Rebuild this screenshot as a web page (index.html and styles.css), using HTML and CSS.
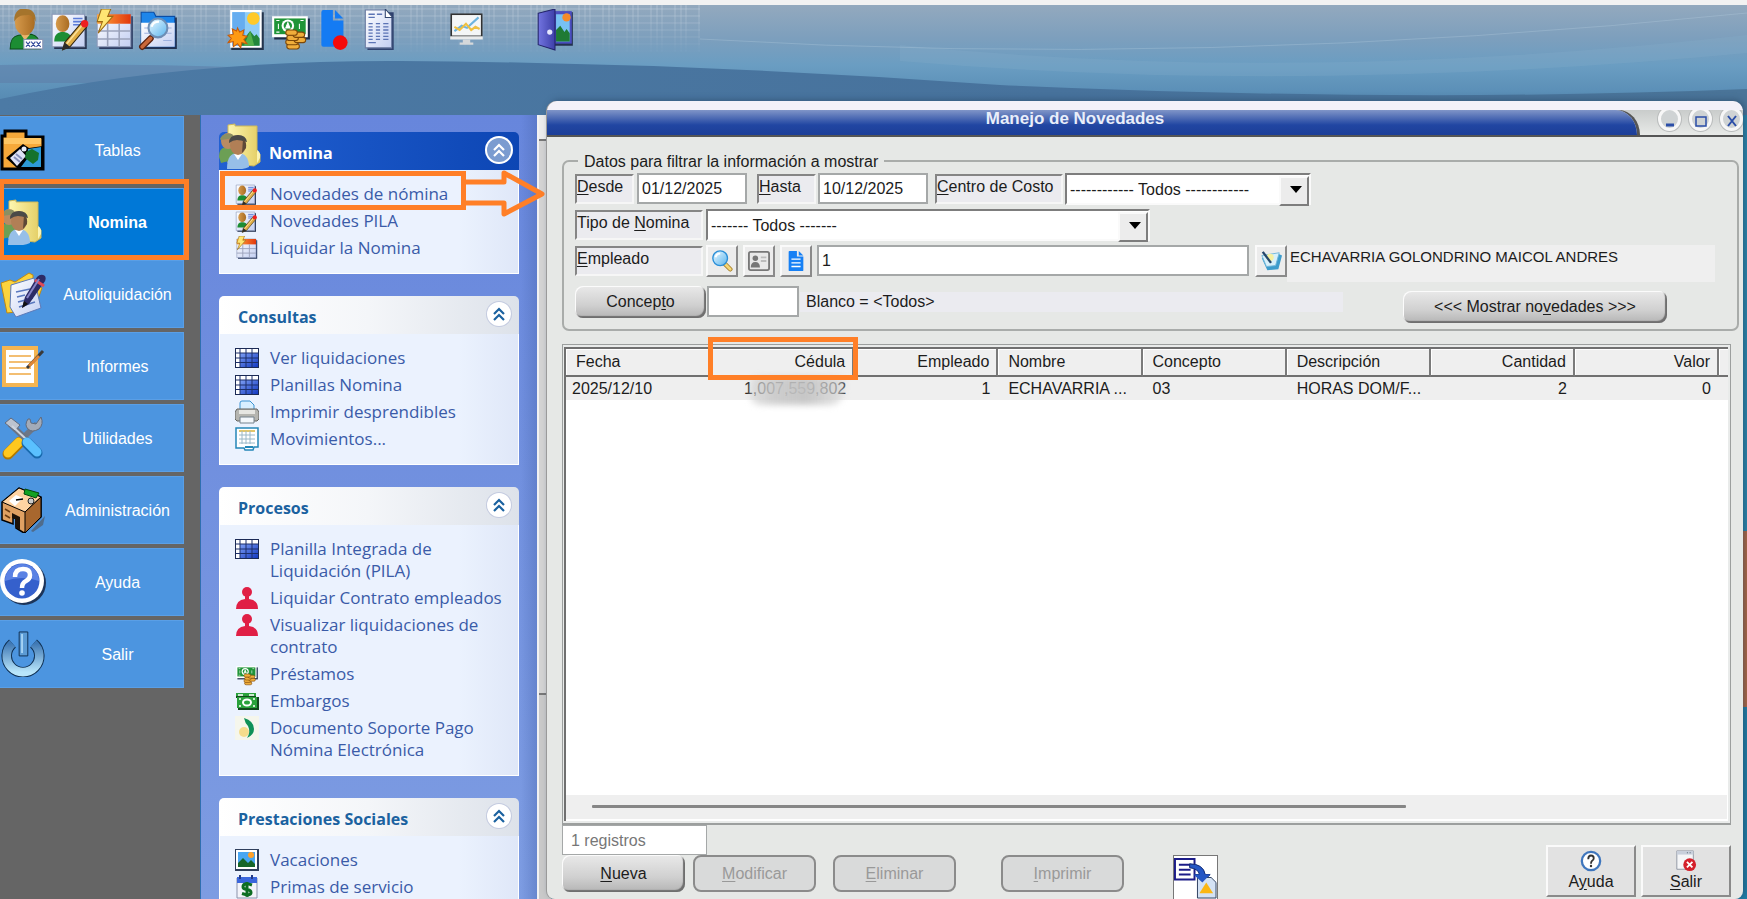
FILE: index.html
```html
<!DOCTYPE html>
<html lang="es">
<head>
<meta charset="utf-8">
<title>Manejo de Novedades</title>
<link rel="stylesheet" href="styles.css">
</head>
<body>
<svg class="sprite" aria-hidden="true">
  <defs>
    <linearGradient id="gSkin" x1="0" x2="1"><stop offset="0" stop-color="#d69a4c"/><stop offset="1" stop-color="#a96c22"/></linearGradient>
    <linearGradient id="gOrange" x1="0" x2="1"><stop offset="0" stop-color="#ffa63c"/><stop offset="1" stop-color="#e2380c"/></linearGradient>
    <linearGradient id="gPaper" x1="0" x2="1" y2="1"><stop offset="0" stop-color="#fff"/><stop offset="1" stop-color="#c3cff2"/></linearGradient>
    <linearGradient id="gLens" x1="0" x2="1" y2="1"><stop offset="0" stop-color="#eefaff"/><stop offset="1" stop-color="#58b4ee"/></linearGradient>
    <linearGradient id="gFolder" x1="0" x2="1"><stop offset="0" stop-color="#fdf6b0"/><stop offset="1" stop-color="#e3cd62"/></linearGradient>
    <linearGradient id="gDoor" x1="0" x2="1"><stop offset="0" stop-color="#7274e0"/><stop offset="1" stop-color="#3d3fa8"/></linearGradient>
    <linearGradient id="gPower" x2="0" y2="1"><stop offset="0" stop-color="#3f78b4"/><stop offset="1" stop-color="#b9e6fb"/></linearGradient>
    <linearGradient id="gCell" x1="0" x2="1" y2="1"><stop offset="0" stop-color="#7fa0f4"/><stop offset="1" stop-color="#1238c0"/></linearGradient>
  </defs>
  <symbol id="i-user" viewBox="0 0 38 40">
    <path d="M3 38c0-8 2-12 8-13l12-1c5 1 8 4 9 14z" fill="#1c8d33" stroke="#0a4d18"/>
    <path d="M13 24l4 6 5-6z" fill="#e9b36c"/>
    <ellipse cx="17" cy="13" rx="9.500" ry="12" fill="url(#gSkin)"/>
    <path d="M7 12C6 3 12-2 18 0c7 0 10 6 9 12-2-5-4-7-9-6-5 0-8 1-11 6z" fill="#a5742c"/>
    <rect x="16" y="29" width="18" height="9" fill="#fff" stroke="#8a97b5"/>
    <path d="M18 31l4 5m0-5l-4 5m5-5l4 5m0-5l-4 5m5-5l4 5m0-5l-4 5" stroke="#334a9a" fill="none"/>
  </symbol>
  <symbol id="i-edit" viewBox="0 0 38 40">
    <path d="M3 7h31v31H3z" fill="#23314f"/><path d="M1 5h31v31H1z" fill="url(#gPaper)" stroke="#8b98b8"/>
    <path d="M3 31c0-7 4-9 8-9s9 2 9 9z" fill="#1c8d33"/>
    <ellipse cx="11" cy="14" rx="6.500" ry="8" fill="url(#gSkin)"/>
    <path d="M21 9h9m-9 3h9m-9 3h6" stroke="#5b7bd8" stroke-width="1.500"/>
    <path d="M11 39l2-7L29 13l5 4-16 19z" fill="#e0ad45" stroke="#33250c"/>
    <path d="M11 39l2-7 5 4z" fill="#2c2c2c"/><path d="M15 33l15-18" stroke="#fbe09a" stroke-width="1.500"/>
    <circle cx="32" cy="14" r="3.500" fill="#ee2020"/>
  </symbol>
  <symbol id="i-bolt" viewBox="0 0 38 40">
    <path d="M4 7h32v31H4z" fill="#2c3c62"/><path d="M2 5h32v31H2z" fill="url(#gPaper)" stroke="#8b98b8"/>
    <path d="M2 5h32v9H2z" fill="url(#gOrange)"/>
    <path d="M2 21h32M2 28.500h32M12 14v22M23 14v22" stroke="#9aa2ba" stroke-width="1.500"/>
    <path d="M6 0h9l-3 7h5L3 23l4-11H2z" fill="#ffe673" stroke="#9b6a14"/>
  </symbol>
  <symbol id="i-find" viewBox="0 0 38 40">
    <path d="M3 8h33v30H3z" fill="#23314f"/>
    <path d="M2 3h12l2 4h18v29H2z" fill="#1e86ea" stroke="#0b4da5"/>
    <path d="M2 13h32v23H2z" fill="url(#gPaper)"/><path d="M5 18h10m-10 5h8m12-5h6m-6 5h6m-8 7h8" stroke="#9db1e0"/>
    <path d="M11 28l-8 8" stroke="#5d2410" stroke-width="6" stroke-linecap="round"/><path d="M11 28l-8 8" stroke="#c9683a" stroke-width="3.500" stroke-linecap="round"/>
    <circle cx="18" cy="18" r="9" fill="url(#gLens)" stroke="#6d8eb5" stroke-width="2"/>
    <path d="M12 17c1-4 4-5 7-5" stroke="#fff" stroke-width="2" fill="none"/>
  </symbol>
  <symbol id="i-picture" viewBox="0 0 38 40">
    <path d="M4 3h31v36H4z" fill="#24344c"/><path d="M3 1h30v36H3z" fill="#fff"/><path d="M5 3h26v32H5z" fill="#8fcdf6"/><path d="M5 3h12v32H5z" fill="#66adf0"/>
    <circle cx="25" cy="9" r="6" fill="#ffc928"/><path d="M11 35l11-14 4 5 2-2 3 4v7z" fill="#23863a"/><path d="M22 21l-6 14h10z" fill="#52b04b"/>
    <path d="M10 18l2 4 4-2-1 5 4 1-3 3 3 4-5-1-1 5-3-4-4 3v-5l-5 1 3-4-3-3 5-1-1-5 4 2z" fill="#ff9a12" stroke="#c65a08"/>
  </symbol>
  <symbol id="i-money" viewBox="0 0 38 40">
    <path d="M3 9h34v20H3z" fill="#1c2c49"/><path d="M1 7h34v20H1z" fill="#fff"/><path d="M3 9h30v15H3z" fill="#1f9438"/>
    <circle cx="16" cy="16" r="6" fill="#fff"/><circle cx="16" cy="16" r="4" fill="#1f9438"/><path d="M16 13l2 5h-4zM5 11h3m-3 11h3m20-11h3M7 14v5m20-5v5" stroke="#fff" fill="#fff"/>
    <g fill="#f0ae3b" stroke="#7c4708"><rect x="15" y="33" width="12" height="5" rx="2.500"/><rect x="14" y="29" width="12" height="5" rx="2.500"/><rect x="22" y="27" width="11" height="5" rx="2.500"/><rect x="15" y="25" width="11" height="5" rx="2.500"/><rect x="21" y="22" width="11" height="5" rx="2.500"/><rect x="14" y="20" width="11" height="5" rx="2.500"/></g>
  </symbol>
  <symbol id="i-filedot" viewBox="0 0 38 40">
    <path d="M6 3q0-2 2-2h9v10h10v24q0 1-2 1H8q-2 0-2-2z" fill="#147bf3"/><path d="M19 1l8 8h-8z" fill="#147bf3"/>
    <circle cx="24" cy="32" r="7" fill="#f60a0a"/>
  </symbol>
  <symbol id="i-doc" viewBox="0 0 38 40">
    <path d="M8 3h25v36H8z" fill="#2f426e"/><path d="M6 1h19l6 7v29H6z" fill="url(#gPaper)" stroke="#6d7da3"/><path d="M25 0v8h7z" fill="#fff" stroke="#33476f"/>
    <path d="M9 5h6m2 0h5M9 8h6M9 14h4m3 0h4m3 0h5M9 17h4m3 0h4m3 0h5M9 20h4m3 0h4m3 0h5M9 23h4m3 0h4m3 0h5M9 26h4m3 0h4m3 0h5M9 29h4m3 0h4m3 0h5M9 32h7" stroke="#5c74b5" stroke-width="1.200"/>
  </symbol>
  <symbol id="i-monitor" viewBox="0 0 38 40">
    <rect x="4" y="5" width="29" height="21" fill="#f4f6f7" stroke="#333" stroke-width="1.500"/><path d="M3 26h31v3H3z" fill="#e9ebec"/>
    <path d="M7 21l7-5 5 2 11-10" stroke="#6db4e0" stroke-width="2" fill="none"/><path d="M7 17l5 3 6-6 5 6 4-3 4 2" stroke="#efc043" stroke-width="2" fill="none"/>
    <path d="M15 29h7v3h3v2H12v-2h3z" fill="#d5d8da"/>
  </symbol>
  <symbol id="i-door" viewBox="0 0 38 40">
    <path d="M16 3h20v32H16z" fill="#23314f"/><path d="M18 2h17v31H18z" fill="#4b4ec0"/><path d="M20 5h13v26H20z" fill="#77c1f3"/><circle cx="30" cy="8" r="4" fill="#f58a2a"/><path d="M20 31V20l4-4 4 6 2-3 3 4v8z" fill="#1f7a34"/>
    <path d="M3 4l16-4v39L3 34z" fill="url(#gDoor)" stroke="#23246b"/><circle cx="14" cy="22" r="2.500" fill="#e6e8ff"/>
  </symbol>
  <symbol id="i-tables" viewBox="0 0 46 46">
    <path d="M2 42V9h3V4h21v6h17v32z" fill="#f6a93a" stroke="#000" stroke-width="3"/><path d="M4 11h37v6H4z" fill="#ffc663"/>
    <path d="M6 31l17-14 6 4 14-2v22H17z" fill="#000"/><path d="M10 31l10-9 6 7-9 10z" fill="#dfe2f6"/><path d="M14 30l6 5m-4-8l6 5" stroke="#8790bb" stroke-width="2"/>
    <path d="M28 22l13-2v20H21l6-8z" fill="#2d9ad6"/><path d="M26 25l6-3 7 4-1 7-5 4-8-6z" fill="#15722b"/><circle cx="24" cy="22" r="2.500" fill="#e9eef8"/>
  </symbol>
  <symbol id="i-folderuser" viewBox="0 0 46 46">
    <path d="M9 2l7-1v2h22v26l3 2v8l-6 4-26-3z" fill="url(#gFolder)" stroke="#cdb85a"/><path d="M38 27q4 2 3 8l-3 5z" fill="#fbf4b4"/>
    <path d="M0 34c0-8 4-10 9-10s8 4 9 12L2 40z" fill="#6c9f55"/><ellipse cx="9" cy="18" rx="7" ry="8" fill="#b98b62"/><path d="M1 16q2-6 12-5l3 4-14 2z" fill="#8b8f62"/>
    <path d="M8 46c0-12 4-16 11-16s11 5 11 14q-10 4-22 2z" fill="#97bfe8"/><path d="M15 31l4 6 4-6z" fill="#fff"/><ellipse cx="19" cy="22" rx="8" ry="10" fill="#b17f56"/><path d="M10 20q0-8 9-8 8 0 9 7-7-2-10-2-4 0-8 3z" fill="#4a4a48"/><path d="M24 16q4 3 3 9l-4 5z" fill="#5d4837"/>
  </symbol>
  <symbol id="i-auto" viewBox="0 0 46 46">
    <path d="M1 12l9-3 5 2 14-9 4 2v5l9 8-8 22-27 3z" fill="#fbd33d" stroke="#c08a12"/>
    <path d="M11 14l23-7 7 30-25 9-6-10z" fill="url(#gPaper)" stroke="#5c7ab9"/><path d="M16 21l14-3m-13 8l8-2m-7 7l15-4m-14 9l16-5" stroke="#5a78be" stroke-width="1.500"/>
    <path d="M22 37l3-11L37 6q4-4 8-1 2 4-2 8L29 33z" fill="#2c2b66"/><path d="M22 37l2-7 4 3z" fill="#111"/><path d="M35 9l9 6" stroke="#e24a55" stroke-width="3"/><path d="M27 27L39 8" stroke="#8583c6" stroke-width="2"/>
  </symbol>
  <symbol id="i-report" viewBox="0 0 46 46">
    <path d="M2 3h36v41H2z" fill="#f4b552"/><path d="M6 7h28v33H6z" fill="#fff"/><path d="M9 13h22M9 19h22M9 25h22M9 31h22" stroke="#f0a944" stroke-width="1.500"/>
    <path d="M27 25L43 8" stroke="#3a3a3a" stroke-width="3"/><path d="M29 23l10-10" stroke="#e08734" stroke-width="3"/>
  </symbol>
  <symbol id="i-tools" viewBox="0 0 46 46">
    <path d="M20 27l-12 12" stroke="#b07800" stroke-width="11" stroke-linecap="round"/><path d="M19 27l-11 11" stroke="#ffc81e" stroke-width="9" stroke-linecap="round"/>
    <path d="M23 23L37 9" stroke="#6d7787" stroke-width="6"/><path d="M28 4q-4 6 0 10 4 4 11 0 5-5 2-12l-5 7-5-1-1-4z" fill="#a3abb8" stroke="#616b7d"/>
    <path d="M10 9l18 17" stroke="#6b7484" stroke-width="6"/><path d="M5 8l6-5 9 7-5 6z" fill="#bcc3cf" stroke="#616b7d"/><path d="M12 11l14 13" stroke="#cfd5de" stroke-width="2"/>
    <path d="M27 28l10 10" stroke="#1769ad" stroke-width="11" stroke-linecap="round"/><path d="M27 27l10 10" stroke="#5ac0ff" stroke-width="9" stroke-linecap="round"/>
  </symbol>
  <symbol id="i-desk" viewBox="0 0 46 46">
    <path d="M31 44l14-15-2 9-10 7z" fill="#4f6c8c"/>
    <path d="M2 15L19 1l22 9v20L24 46l-8-5v-9l-3-2v7L2 33z" fill="#e0a163" stroke="#000" stroke-width="1.500"/><path d="M12 26l8 4v13l-5-3v-8l-3-1z" fill="#1d1208"/><path d="M2 15L19 1l22 9-16 15z" fill="#ffd3a2" stroke="#000"/><path d="M25 25v21l16-16V10z" fill="#a8672e" stroke="#000"/>
    <path d="M9 14l7-6 7 3-8 8z" fill="#fff"/><path d="M16 13l7-1" stroke="#000" stroke-width="1.500"/><path d="M25 2l14 4-3 5-12-4z" fill="#13a123" stroke="#03480b"/><circle cx="31" cy="14" r="3" fill="#ccc" stroke="#222"/>
    <path d="M5 22l5 3m-5 3l5 3" stroke="#6a3c12" stroke-width="1.500"/>
  </symbol>
  <symbol id="i-help" viewBox="0 0 46 46">
    <circle cx="24" cy="24" r="22" fill="#1c3459"/><circle cx="22" cy="22" r="22" fill="#fff"/><circle cx="22" cy="22" r="17.500" fill="#3560cc"/><path d="M5 22a17 17 0 0 1 34 0q-17-6-34 0z" fill="#5a82e4"/>
    <path d="M15 18q0-8 8-8 7 0 7 6 0 4-4 6-4 2-4 7" stroke="#fff" stroke-width="4.500" fill="none"/><circle cx="22" cy="34" r="2.800" fill="#fff"/>
  </symbol>
  <symbol id="i-power" viewBox="0 0 48 46">
    <path d="M13 12A17 17 0 1 0 35 12" stroke="#0e2f52" stroke-width="11" fill="none"/><path d="M13 12A17 17 0 1 0 35 12" stroke="url(#gPower)" stroke-width="9" fill="none"/>
    <path d="M20 0h9v25h-9z" fill="#5c9bd4" stroke="#0e2f52"/><path d="M22 2h2v20h-2z" fill="#a4d2f4"/>
  </symbol>
  <symbol id="i-grid" viewBox="0 0 24 24">
    <path d="M0 2h24v20H0z" fill="#1b2a55"/><path d="M1 3h22v4H1zM1 3h4v18H1z" fill="#fff"/><path d="M5 7h18v14H5z" fill="url(#gCell)"/>
    <path d="M5 3v18M11 3v18M17 3v18M1 7h22M1 12h22M1 16.500h22" stroke="#1c2f6b"/>
  </symbol>
  <symbol id="i-printer" viewBox="0 0 24 24">
    <path d="M5 11V3q0-2 2-2h8l4 4v6z" fill="#d8efff" stroke="#3b93d2"/><path d="M2 9h20l2 3v7l-2 2H2l-2-2v-7z" fill="#b5b5b0" stroke="#63635f"/><path d="M4 10h16v4H4z" fill="#e6e6e2"/><path d="M5 17h14v6H5z" fill="#f3f7fb" stroke="#74828e"/>
  </symbol>
  <symbol id="i-sheet" viewBox="0 0 24 24">
    <path d="M1 1h22v19h-4l-1 3h-8l-1-2H1z" fill="#fff" stroke="#2487b8" stroke-width="1.500"/><path d="M4 4h16" stroke="#e2c66c" stroke-width="2"/><path d="M4 8h16M4 12h16M4 16h16M7 4v13M11 4v13M15 4v13" stroke="#9ab8c8"/><path d="M10 20h8" stroke="#2487b8" stroke-width="2"/>
  </symbol>
  <symbol id="i-person" viewBox="0 0 24 24">
    <circle cx="12" cy="6" r="5" fill="#e01f45"/><path d="M10 9h4v4q9 1 9 10H1q0-9 9-10z" fill="#e01f45"/>
  </symbol>
  <symbol id="i-bills" viewBox="0 0 24 24">
    <path d="M1 4h20v4h3v13H3V9H1z" fill="#12481c"/><path d="M1 4h20v3H1zM2 8h20v11H2z" fill="#2aa23c"/><path d="M3 6h5m6 0h5M4 10h2m12 0h2M4 17h2m12 0h2" stroke="#fff" stroke-width="1.500"/><ellipse cx="12" cy="13.500" rx="4" ry="3" fill="none" stroke="#fff" stroke-width="2"/>
  </symbol>
  <symbol id="i-leaf" viewBox="0 0 24 24">
    <path d="M0 0h24v24H0z" fill="#f5f6ec"/><circle cx="9" cy="16" r="5" fill="#f5dc8c"/><path d="M9 2q10 3 10 11 0 6-7 9 4-6 1-12-3-3-4-8z" fill="#0f9158"/>
  </symbol>
  <symbol id="i-photo" viewBox="0 0 24 24">
    <path d="M0 1h24v22H0z" fill="#2f3f5c"/><path d="M1 2h21v19H1z" fill="#fff"/><path d="M3 4h17v15H3z" fill="#49a6f2"/><circle cx="16" cy="7" r="3" fill="#ffa02a"/><path d="M3 19v-4l5-5 5 5 3-3 4 4v3z" fill="#17662a"/>
  </symbol>
  <symbol id="i-cash" viewBox="0 0 24 24">
    <path d="M2 3h20v20H2z" fill="#f3f4fa" stroke="#8b93ab"/><path d="M2 2h20v6H2z" fill="#3a66dc"/><path d="M5 0v4m12-4v4" stroke="#223a87" stroke-width="2"/>
    <path d="M17 10q-9-3-9 2 0 2 4 2.500t4 3q0 4-9 1M12 7v15" stroke="#0d6d22" stroke-width="3" fill="none"/>
  </symbol>
  <symbol id="i-lens" viewBox="0 0 24 24">
    <path d="M14 14l7 7" stroke="#a8822b" stroke-width="5" stroke-linecap="round"/><path d="M14 14l7 7" stroke="#f6d777" stroke-width="3" stroke-linecap="round"/><circle cx="10" cy="9" r="8" fill="url(#gLens)" stroke="#2a8fd8" stroke-width="1.500"/><path d="M5 8q1-4 5-4" stroke="#fff" stroke-width="2" fill="none"/>
  </symbol>
  <symbol id="i-idcard" viewBox="0 0 24 24">
    <rect x="1" y="2" width="22" height="20" rx="2" fill="#e8e8e8" stroke="#777" stroke-width="2"/><circle cx="8" cy="9" r="3" fill="#777"/><path d="M3 19q0-6 5-6t5 6z" fill="#777"/><path d="M14 8h6m-6 4h6" stroke="#bbb" stroke-width="2"/>
  </symbol>
  <symbol id="i-file" viewBox="0 0 24 24">
    <path d="M4 2q0-1 1-1h8v6h7v15q0 1-1 1H5q-1 0-1-1z" fill="#1680f5"/><path d="M15 1l5 5h-5z" fill="#1680f5"/><path d="M7 10h10M7 14h10M7 18h10" stroke="#fff" stroke-width="1.500"/>
  </symbol>
  <symbol id="i-pencilpad" viewBox="0 0 24 24">
    <path d="M2 9l6 13 12-1 4-15-4-2z" fill="#3d9ccc"/><path d="M2 6l5 12 10-1 4-14z" fill="#d8f0fa" stroke="#6eb6da"/><circle cx="11" cy="8" r="4" fill="#f6f0a0"/><path d="M3 2l9 12" stroke="#24466b" stroke-width="2.500"/>
  </symbol>
  <symbol id="i-export" viewBox="0 0 44 44">
    <path d="M0 0h44v44H0z" fill="#fff"/><path d="M1 3h20v21H1z" fill="#fff" stroke="#1c1c88" stroke-width="2"/><path d="M5 9h12M5 14h12M5 19h12" stroke="#1c1c88" stroke-width="2"/>
    <path d="M16 8q14 0 16 11h5l-8 8-8-8h5q-1-6-10-7z" fill="#2456c4" stroke="#122a72"/><path d="M24 22h14l5 5v16H24z" fill="#d4e2f4" stroke="#2d3f60"/><path d="M20 19h17l-8 8z" fill="#2456c4"/><path d="M33 27l7 11H26z" fill="#fbb613"/>
  </symbol>
  <symbol id="i-winx" viewBox="0 0 24 24">
    <path d="M2 1h18v20H2z" fill="#f5f6f8" stroke="#8c94a0"/><path d="M2 1h18v4H2z" fill="#c9d0dc"/><path d="M13 3h1m2 0h1" stroke="#456"/><circle cx="16" cy="16" r="7" fill="#d4202b"/><path d="M13 13l6 6m0-6l-6 6" stroke="#fff" stroke-width="2"/>
  </symbol>
  <symbol id="i-qhex" viewBox="0 0 24 24">
    <circle cx="12" cy="12" r="10" fill="#fff" stroke="#3f76bd" stroke-width="2.500"/><path d="M9 10q0-4 3-4t3 3q0 2-2 3-1 1-1 3" stroke="#333" stroke-width="2" fill="none"/><circle cx="12" cy="17.500" r="1.300" fill="#333"/>
  </symbol>
  <symbol id="i-up" viewBox="0 0 24 24">
    <path d="M7 12l5-5 5 5M7 18l5-5 5 5" fill="none" stroke="currentColor" stroke-width="2.200"/>
  </symbol>
</svg>

<header class="banner">
  <svg class="banner-art" viewBox="0 0 1747 110" preserveAspectRatio="none" aria-hidden="true">
    <defs>
      <linearGradient id="sky" x2="0" y2="1"><stop offset="0" stop-color="#93a9be"/><stop offset=".3" stop-color="#7d9fbd"/><stop offset=".55" stop-color="#6a9dc2"/><stop offset="1" stop-color="#4e83ad"/></linearGradient>
      <linearGradient id="hill" x1="0" x2="1"><stop offset="0" stop-color="#4c7aa5"/><stop offset=".6" stop-color="#47729c"/><stop offset="1" stop-color="#4a7498"/></linearGradient>
      <pattern id="weave" width="24" height="14" patternUnits="userSpaceOnUse"><path d="M3 0v14M9 0v14M14 0v14M0 4h24M0 11h24" stroke="#d5e1ec" stroke-opacity=".4"/></pattern>
      <linearGradient id="fade" x2="0" y2="1"><stop offset="0" stop-color="#fff"/><stop offset="1" stop-color="#000"/></linearGradient>
      <mask id="m"><path d="M0 0h700v50H0z" fill="url(#fade)"/></mask>
    </defs>
    <path d="M0 0h1747v110H0z" fill="url(#sky)"/>
    <path d="M0 0h700v50H0z" fill="url(#weave)" mask="url(#m)"/>
    <path d="M0 60Q90 58 230 62L120 78H0z" fill="#5d7fa9" fill-opacity=".6"/>
    <path d="M0 94Q180 55 400 56 700 58 1000 80 1400 98 1747 84V110H0z" fill="url(#hill)"/>
    <path d="M900 40Q1300 80 1747 30V48Q1300 90 900 56z" fill="#86aecb" fill-opacity=".25"/>
    <path d="M700 34Q1200 64 1747 8" stroke="#b8d0e2" stroke-opacity=".3" fill="none"/>
  </svg>
  <nav class="toolbar" aria-label="Accesos">
    <button class="tool" aria-label="Usuario"><svg><use href="#i-user"/></svg></button>
    <button class="tool" aria-label="Novedades"><svg><use href="#i-edit"/></svg></button>
    <button class="tool" aria-label="Liquidar"><svg><use href="#i-bolt"/></svg></button>
    <button class="tool tool-end" aria-label="Buscar"><svg><use href="#i-find"/></svg></button>
    <button class="tool" aria-label="Vacaciones"><svg><use href="#i-picture"/></svg></button>
    <button class="tool" aria-label="Préstamos"><svg><use href="#i-money"/></svg></button>
    <button class="tool" aria-label="Documento"><svg><use href="#i-filedot"/></svg></button>
    <button class="tool tool-end" aria-label="Reporte"><svg><use href="#i-doc"/></svg></button>
    <button class="tool tool-end" aria-label="Gráfico"><svg><use href="#i-monitor"/></svg></button>
    <button class="tool" aria-label="Cerrar"><svg><use href="#i-door"/></svg></button>
  </nav>
</header>

<div class="desktop">
  <nav class="modules" aria-label="Módulos">
    <button class="module"><svg><use href="#i-tables"/></svg><span>Tablas</span></button>
    <button class="module active"><svg><use href="#i-folderuser"/></svg><span>Nomina</span></button>
    <button class="module"><svg><use href="#i-auto"/></svg><span>Autoliquidación</span></button>
    <button class="module"><svg><use href="#i-report"/></svg><span>Informes</span></button>
    <button class="module"><svg><use href="#i-tools"/></svg><span>Utilidades</span></button>
    <button class="module"><svg><use href="#i-desk"/></svg><span>Administración</span></button>
    <button class="module"><svg><use href="#i-help"/></svg><span>Ayuda</span></button>
    <button class="module"><svg><use href="#i-power"/></svg><span>Salir</span></button>
  </nav>

  <aside class="tasks">
    <section class="group main">
      <h2 class="group-head"><svg class="group-icon"><use href="#i-folderuser"/></svg><span>Nomina</span><button class="fold" aria-label="Contraer"><svg><use href="#i-up"/></svg></button></h2>
      <ul class="links">
        <li class="marked"><svg><use href="#i-edit"/></svg><a href="#">Novedades de nómina</a>
          <svg class="arrow" viewBox="0 0 80 48" aria-hidden="true"><path d="M1 13h38V4l38 21-38 20V34H1" fill="none" stroke="#ff7f27" stroke-width="5" stroke-linejoin="round"/></svg></li>
        <li><svg><use href="#i-edit"/></svg><a href="#">Novedades PILA</a></li>
        <li><svg><use href="#i-bolt"/></svg><a href="#">Liquidar la Nomina</a></li>
      </ul>
    </section>
    <section class="group">
      <h2 class="group-head"><span>Consultas</span><button class="fold" aria-label="Contraer"><svg><use href="#i-up"/></svg></button></h2>
      <ul class="links">
        <li><svg><use href="#i-grid"/></svg><a href="#">Ver liquidaciones</a></li>
        <li><svg><use href="#i-grid"/></svg><a href="#">Planillas Nomina</a></li>
        <li><svg><use href="#i-printer"/></svg><a href="#">Imprimir desprendibles</a></li>
        <li><svg><use href="#i-sheet"/></svg><a href="#">Movimientos...</a></li>
      </ul>
    </section>
    <section class="group">
      <h2 class="group-head"><span>Procesos</span><button class="fold" aria-label="Contraer"><svg><use href="#i-up"/></svg></button></h2>
      <ul class="links">
        <li><svg><use href="#i-grid"/></svg><a href="#">Planilla Integrada de<br>Liquidación (PILA)</a></li>
        <li><svg><use href="#i-person"/></svg><a href="#">Liquidar Contrato empleados</a></li>
        <li><svg><use href="#i-person"/></svg><a href="#">Visualizar liquidaciones de<br>contrato</a></li>
        <li><svg><use href="#i-money"/></svg><a href="#">Préstamos</a></li>
        <li><svg><use href="#i-bills"/></svg><a href="#">Embargos</a></li>
        <li><svg><use href="#i-leaf"/></svg><a href="#">Documento Soporte Pago<br>Nómina Electrónica</a></li>
      </ul>
    </section>
    <section class="group">
      <h2 class="group-head"><span>Prestaciones Sociales</span><button class="fold" aria-label="Contraer"><svg><use href="#i-up"/></svg></button></h2>
      <ul class="links">
        <li><svg><use href="#i-photo"/></svg><a href="#">Vacaciones</a></li>
        <li><svg><use href="#i-cash"/></svg><a href="#">Primas de servicio</a></li>
      </ul>
    </section>
  </aside>
  <div class="track"></div>
</div>

<main class="window">
  <div class="titlebar">
    <h1 class="title">Manejo de Novedades</h1>
    <div class="controls">
      <button aria-label="Minimizar"><svg viewBox="0 0 12 12"><path d="M2 10h8" stroke-width="3"/></svg></button>
      <button aria-label="Maximizar"><svg viewBox="0 0 12 12"><path d="M1 2h10v9H1z" stroke-width="1.500"/></svg></button>
      <button aria-label="Cerrar"><svg viewBox="0 0 12 12"><path d="M2 1l8 10m0-10L2 11" stroke-width="2"/></svg></button>
    </div>
  </div>

  <fieldset class="filters">
    <legend>Datos para filtrar la información a mostrar</legend>
    <div class="row">
      <label class="tag short" for="desde"><u>D</u>esde</label>
      <input class="text date" id="desde" value="01/12/2025">
      <label class="tag short second" for="hasta"><u>H</u>asta</label>
      <input class="text date" id="hasta" value="10/12/2025">
      <label class="tag centre" for="centro"><u>C</u>entro de Costo</label>
      <div class="combo cost"><select id="centro"><option>------------ Todos ------------</option></select></div>
    </div>
    <div class="row">
      <label class="tag" for="tipo">Tipo de <u>N</u>omina</label>
      <div class="combo kind"><select id="tipo"><option>------- Todos -------</option></select></div>
    </div>
    <div class="row employee">
      <label class="tag" for="empleado"><u>E</u>mpleado</label>
      <button class="square" aria-label="Buscar empleado"><svg><use href="#i-lens"/></svg></button>
      <button class="square" aria-label="Ficha"><svg><use href="#i-idcard"/></svg></button>
      <button class="square" aria-label="Documento"><svg><use href="#i-file"/></svg></button>
      <input class="text grow" id="empleado" value="1">
      <button class="square" aria-label="Editar"><svg><use href="#i-pencilpad"/></svg></button>
      <output class="fullname" for="empleado">ECHAVARRIA GOLONDRINO MAICOL ANDRES</output>
    </div>
    <div class="row concept">
      <button class="pill concept-button">Concep<u>t</u>o</button>
      <input class="text code" aria-label="Concepto">
      <span class="note">Blanco = &lt;Todos&gt;</span>
      <button class="pill show">&lt;&lt;&lt; Mostrar no<u>v</u>edades &gt;&gt;&gt;</button>
    </div>
  </fieldset>

  <div class="list">
    <div class="list-inner">
      <table>
        <colgroup><col><col><col><col><col><col><col><col><col class="stub"></colgroup>
        <thead><tr><th>Fecha</th><th class="num framed">Cédula</th><th class="num">Empleado</th><th>Nombre</th><th>Concepto</th><th>Descripción</th><th class="num">Cantidad</th><th class="num">Valor</th><th></th></tr></thead>
        <tbody><tr><td class="first">2025/12/10</td><td class="num smudged">1,007,559,802</td><td class="num">1</td><td>ECHAVARRIA ...</td><td>03</td><td>HORAS DOM/F...</td><td class="num">2</td><td class="num">0</td><td></td></tr></tbody>
      </table>
      <div class="scroller"><div class="thumb"></div></div>
    </div>
  </div>

  <footer class="footer">
    <div class="actions">
      <div class="count">1 registros</div>
      <div class="buttons">
        <button class="pill action"><u>N</u>ueva</button>
        <button class="pill action" disabled><u>M</u>odificar</button>
        <button class="pill action third" disabled><u>E</u>liminar</button>
        <button class="pill action fourth" disabled><u>I</u>mprimir</button>
        <button class="export" aria-label="Exportar"><svg><use href="#i-export"/></svg></button>
      </div>
    </div>
    <div class="exits">
      <button class="big"><svg><use href="#i-qhex"/></svg><span>A<u>y</u>uda</span></button>
      <button class="big"><svg><use href="#i-winx"/></svg><span><u>S</u>alir</span></button>
    </div>
  </footer>
</main>
</body>
</html>
```

FILE: styles.css
```css
* { box-sizing: border-box; }

body {
  margin: 0;
  height: 100vh;
  overflow: hidden;
  display: flex;
  flex-direction: column;
  position: relative;
  border-top: 5px solid #f2f2f2;
  background: #1f7ea6;
  font: 16px/20px "Liberation Sans", Arial, sans-serif;
  color: #1c1c1c;
}

button, input, select { font: inherit; color: inherit; margin: 0; }
button { padding: 0; border: 0; background: none; }
u { text-underline-offset: 2px; }
.sprite { position: absolute; width: 0; height: 0; }

/* Banner */
.banner { position: relative; flex: 0 0 110px; }
.banner-art { position: absolute; inset: 0; width: 100%; height: 100%; }
.toolbar { position: relative; display: flex; padding: 4px 5px; }
.tool { width: 44px; height: 42px; }
.tool svg { display: block; width: 44px; height: 42px; overflow: visible; }
.tool-end { margin-right: 44px; }

/* Modules */
.desktop {
  flex: 1;
  min-height: 0;
  display: flex;
  background: linear-gradient(#2a86ac 0 416px, #b5673f 416px 592px, #1f7ea6 592px);
}
.modules {
  flex: 0 0 200px;
  display: flex;
  flex-direction: column;
  gap: 4px;
  padding: 1px 16px 0 0;
  background: #656565;
}
.module {
  position: relative;
  height: 68px;
  display: flex;
  align-items: center;
  background: #4c95e0;
  border: 1px solid #5a9fe6;
  border-left: 0;
  color: #fff;
}
.module svg { flex: 0 0 46px; height: 46px; }
.module span { flex: 1; padding: 2px 0 0 6px; }
.module.active { background: #0078d7; font-weight: bold; }
.module.active::after {
  content: "";
  position: absolute;
  inset: -10px -6px -5px -1px;
  border: 5px solid #ff7f27;
}

/* Task panel */
.tasks {
  position: relative;
  z-index: 1;
  flex: 0 0 337px;
  padding: 17px 18px 0;
  display: flex;
  flex-direction: column;
  gap: 22px;
  border-left: 1px solid #2f6fb0;
  background: linear-gradient(90deg, transparent 320px, #4a68b066), linear-gradient(#6786dc, #7d9ce2);
  font: 17px/22px "Open Sans", "Noto Sans", sans-serif;
}
.group { flex-shrink: 0; }
.group-head {
  position: relative;
  display: flex;
  align-items: center;
  justify-content: space-between;
  height: 38px;
  margin: 0;
  padding: 4px 8px 0 19px;
  border-radius: 5px 5px 0 0;
  background: linear-gradient(90deg, #fff, #f4f6f9 50%, #dde2ea);
  color: #1b62a0;
  font-size: 16px;
  font-weight: bold;
}
.main .group-head { padding-left: 50px; background: linear-gradient(90deg, #2160d2, #0d46b4); color: #fff; }
.group-icon { position: absolute; left: 0; bottom: 1px; width: 46px; height: 46px; }
.fold {
  width: 24px;
  height: 24px;
  margin-bottom: 6px;
  border-radius: 50%;
  background: #fff;
  box-shadow: 0 0 0 1px #c4cbe0;
}
.fold svg { display: block; width: 24px; height: 24px; }
.main .fold { background: #7b9cd0; box-shadow: 0 0 0 2px #fff; }
.links {
  list-style: none;
  margin: 0;
  padding: 13px 15px 14px;
  display: flex;
  flex-direction: column;
  gap: 5px;
  border: solid #fff;
  border-width: 0 1px 1px;
  background: linear-gradient(90deg, #ebf2fe 80%, #dfe7f8);
}
.links li { position: relative; display: flex; gap: 11px; }
.links li > svg:first-child { flex: 0 0 24px; height: 24px; margin: -1px 0; }
.links a { color: #3a5ba8; text-decoration: none; white-space: nowrap; }
.marked::after {
  content: "";
  position: absolute;
  inset: -12px 37px -5px -15px;
  border: 5px solid #ff7f27;
}
.links .arrow { position: absolute; left: 230px; top: -14px; width: 80px; height: 48px; }

.track {
  flex: 0 0 14px;
  border-left: 2px solid #f2f2f2;
  background: linear-gradient(#ececec 24px, #777 24px 26px, #d3d3d3 26px 578px, #777 578px 580px, #c9c9c9 580px);
}

/* Window */
.window {
  position: absolute;
  z-index: 2;
  top: 96px;
  right: 4px;
  bottom: 0;
  left: 547px;
  display: flex;
  flex-direction: column;
  border-top: 9px solid #f3f1f9;
  border-radius: 10px 10px 8px 8px;
  background: #e6e8e6;
  box-shadow: -1px 0 0 #9a9a9a, 2px -1px 6px #24405e88;
}
.titlebar {
  flex: 0 0 27px;
  display: flex;
  border-bottom: 2px solid #555;
  background: linear-gradient(#c9cccb, #e8eae8);
}
.title {
  flex: 1;
  margin: 0;
  padding-right: 34px;
  border-radius: 0 22px 0 0 / 0 26px 0 0;
  box-shadow: 3px 0 0 #555;
  background: linear-gradient(#8095c8, #2146a2 60%, #1c3e98);
  color: #e9eefa;
  font-size: 17px;
  line-height: 17px;
  text-align: center;
}
.controls { flex: 0 0 106px; display: flex; justify-content: flex-end; gap: 8px; overflow: hidden; }
.controls button {
  width: 23px;
  height: 24px;
  margin-top: -3px;
  border: 3px solid #f7f7f7;
  border-radius: 50%;
  background: #cfd3d4;
  box-shadow: 0 0 0 1px #b9bcbc;
}
.controls svg { display: block; width: 12px; height: 12px; margin: 4px auto 0; fill: none; stroke: #2b4ea8; }

/* Filters */
.filters {
  min-width: 0;
  margin: 13px 4px 13px 15px;
  padding: 2px 0 6px 11px;
  display: flex;
  flex-direction: column;
  border: 2px solid #a9acaa;
  border-radius: 7px;
}
.filters legend { margin-left: 3px; padding: 2px 6px 0; line-height: 19px; }
.row { display: flex; align-items: center; height: 31px; margin-bottom: 5px; }
.tag {
  flex: 0 0 128px;
  height: 30px;
  margin-right: 3px;
  padding: 1px 0;
  border: 2px solid;
  border-color: #858585 #f6f6f6 #f6f6f6 #858585;
  background: #ebebef;
  white-space: nowrap;
}
.tag.short { flex-basis: 59px; }
.tag.second { margin-left: 10px; margin-right: 2px; }
.tag.centre { margin-left: 7px; margin-right: 2px; }
.text { height: 31px; min-width: 0; padding: 0 3px; border: 2px solid #a5a8a8; background: #fff; }
.date { flex: 0 0 110px; }
.combo {
  position: relative;
  height: 32px;
  border: 2px solid;
  border-color: #7d7d7d #fafafa #fafafa #7d7d7d;
  background: #fff;
}
.cost { flex: 0 0 246px; }
.kind { flex: 0 0 444px; }
.combo select { width: 100%; height: 28px; padding: 2px 3px 0; border: 0; appearance: none; background: none; }
.combo::before {
  content: "";
  position: absolute;
  top: 1px;
  right: 0;
  width: 26px;
  height: 26px;
  border: 2px solid;
  border-color: #fafafa #7d7d7d #7d7d7d #fafafa;
  background: #ececec;
  pointer-events: none;
}
.combo::after {
  content: "";
  position: absolute;
  top: 11px;
  right: 7px;
  border: 6px solid transparent;
  border-top: 7px solid #000;
  border-bottom: 0;
  pointer-events: none;
}
.square, .big {
  border: 2px solid;
  border-color: #fafafa #8a8a8a #8a8a8a #fafafa;
  background: #ececec;
}
.square { flex: 0 0 32px; height: 32px; margin-right: 5px; }
.square svg { display: block; width: 24px; height: 22px; margin: auto; }
.grow { flex: 1; margin-right: 6px; }
.grow + .square { margin-right: 0; }
.employee { padding-right: 22px; }
.fullname { flex: 1; align-self: flex-start; height: 37px; padding: 2px 3px; background: #efefef; font-size: 15px; white-space: nowrap; overflow: hidden; }
.concept { margin: 5px 0 0; height: 37px; padding-right: 70px; align-items: flex-start; }
.pill {
  height: 32px;
  border-radius: 8px;
  background: linear-gradient(#e9e9e9, #d0d0d0 60%, #b4b4b4);
  box-shadow: inset 1px 1px 0 #fbfbfb, inset -2px -2px 1px #6f6f6f;
}
.concept-button { flex: 0 0 131px; margin-right: 1px; }
.code { flex: 0 0 92px; }
.note { flex: 1; margin: 6px 60px 0 1px; padding-left: 6px; background: #ebebf0; }
.show { flex: 0 0 264px; margin-top: 5px; }

/* List */
.list {
  flex: 1;
  min-height: 0;
  margin: 0 12px 0 15px;
  padding: 2px 2px 2px 1px;
  display: flex;
  border: 1px solid #9c9f9e;
  border-bottom-width: 2px;
  background: #e9ebea;
}
.list-inner {
  flex: 1;
  min-width: 0;
  display: flex;
  flex-direction: column;
  justify-content: space-between;
  border: solid #707070;
  border-width: 2px 0 0 2px;
  background: #fff;
}
table { width: 100%; border-collapse: separate; border-spacing: 0; table-layout: fixed; }
.stub { width: 9px; }
th, td { position: relative; padding: 0 8px 0 10px; text-align: left; font-weight: normal; white-space: nowrap; }
th {
  height: 28px;
  background: #efefef;
  border-right: 2px solid #7a7a7a;
  border-bottom: 2px solid #707070;
  box-shadow: inset 1px 1px 0 #fff;
}
th.num { padding-right: 7px; }
th:last-child { border-right: 0; padding: 0; }
td { height: 23px; background: #efefef; }
td:last-child { padding: 0; }
.num { text-align: right; }
td.first { padding-left: 6px; }
.framed::after {
  content: "";
  position: absolute;
  inset: -12px -6px -5px -2px;
  border: 5px solid #ff7f27;
  z-index: 1;
}
.smudged::after {
  content: "";
  position: absolute;
  inset: 0 10px -5px 40px;
  border-radius: 8px 4px 14px 10px;
  background: linear-gradient(90deg, #d5d5d5a0, #c8c8c8e0 25%, #c4c4c4f0 60%, #d8d8d8a0);
  filter: blur(3px);
}
.scroller { height: 24px; margin: 0 1px 2px 0; padding: 10px 321px 0 26px; background: #efefef; }
.thumb { height: 3px; background: #868686; border-radius: 1px; }

/* Footer */
.footer { display: flex; justify-content: space-between; margin: 0 12px 0 15px; height: 74px; }
.count { width: 145px; height: 30px; padding: 5px 8px; border: 1px solid #a5a8a8; background: #fff; color: #777; }
.buttons { display: flex; align-items: flex-start; }
.action { width: 123px; height: 37px; margin: 0 8px 0 0; }
.action:disabled { background: #d9dada; border: 2px solid #8b8b8b; box-shadow: none; color: #999; }
.action.third { margin-left: 9px; }
.action.fourth { margin: 0 49px 0 37px; }
.export { width: 45px; height: 44px; border: 1px solid #777; }
.export svg { display: block; width: 43px; height: 43px; }
.exits { display: flex; align-items: flex-start; gap: 5px; padding-top: 20px; }
.big { width: 90px; height: 52px; background: #e2e2e2; }
.big svg { display: block; width: 24px; height: 22px; margin: 0 auto; }
.big span { display: block; line-height: 20px; }
```
